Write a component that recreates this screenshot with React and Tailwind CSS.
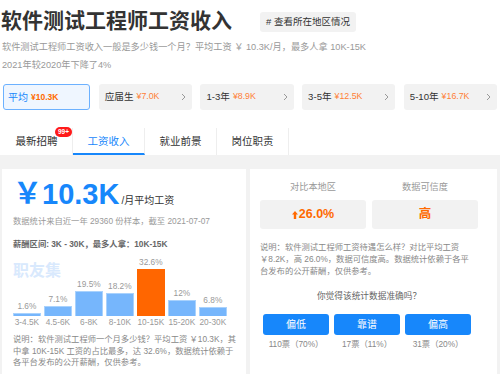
export default function App() {
  const cards = [
    { label: '平均', price: '¥10.3K', active: true },
    { label: '应届生', price: '¥7.0K' },
    { label: '1-3年', price: '¥8.9K' },
    { label: '3-5年', price: '¥12.5K' },
    { label: '5-10年', price: '¥16.7K' },
  ];
  const bars = [
    { pct: '1.6%', h: 3, label: '3-4.5K' },
    { pct: '7.1%', h: 10, label: '4.5-6K' },
    { pct: '19.5%', h: 25, label: '6-8K' },
    { pct: '18.2%', h: 23, label: '8-10K' },
    { pct: '32.6%', h: 47, label: '10-15K', hot: true },
    { pct: '12%', h: 16, label: '15-20K' },
    { pct: '6.8%', h: 9, label: '20-30K' },
  ];
  const tabs = ['最新招聘', '工资收入', '就业前景', '岗位职责'];
  const votes = [
    { t: '偏低', v: '110票（70%）' },
    { t: '靠谱', v: '17票（11%）' },
    { t: '偏高', v: '31票（20%）' },
  ];
  return (
    <div className="w-[500px] h-[374px] overflow-hidden bg-white text-[#333] font-['Liberation_Sans','Noto_Sans_CJK_SC',sans-serif]">
      {/* header */}
      <div className="flex items-start h-[38px]">
        <h1 className="mt-[8px] pl-[1px] text-[21px] leading-[25px] font-bold text-[#333]">软件测试工程师工资收入</h1>
        <span className="ml-[28px] mt-[12px] h-[20px] px-[6px] rounded-[3px] bg-[#f2f2f2] text-[9.5px] leading-[20px] text-[#333]"># 查看所在地区情况</span>
      </div>
      <div className="pl-[2px] text-[9.2px] leading-[18px] text-[#999]">
        <p>软件测试工程师工资收入一般是多少钱一个月？平均工资 ￥ 10.3K/月，最多人拿 10K-15K</p>
        <p>2021年较2020年下降了4%</p>
      </div>
      {/* cards */}
      <div className="mt-[10px] h-[26px] px-[3px] flex gap-[8.5px]">
        {cards.map((c) => (
          <div
            key={c.label}
            className={
              c.active
                ? 'flex-1 flex items-center rounded-[3px] border border-[#6cb1ff] bg-[#eff6ff] pl-[4px]'
                : 'flex-1 flex items-center rounded-[3px] bg-[#f2f2f2] pl-[6px] pr-[6px]'
            }
          >
            <span className={c.active ? 'text-[10px] text-[#1787fb]' : 'text-[9.6px] text-[#333]'}>{c.label}</span>
            <span className={c.active ? 'ml-[3px] text-[8.5px] font-bold text-[#ff6a00]' : 'ml-[3px] text-[8.8px] text-[#ff7f36]'}>{c.price}</span>
            {!c.active && (
              <svg className="ml-auto" width="5" height="8" viewBox="0 0 5 8">
                <polyline points="1,1 4,4 1,7" fill="none" stroke="#999" strokeWidth="1" />
              </svg>
            )}
          </div>
        ))}
      </div>
      {/* tabs */}
      <div className="mt-[18px] h-[27px] pl-[1px] flex">
        {tabs.map((t, i) => (
          <div
            key={t}
            className={
              'relative w-[72px] h-full flex items-center justify-center text-[10.5px] border-r border-[#eeeeee] ' +
              (i === 1 ? 'text-[#1787fb] border-b-2 border-b-[#1787fb] pt-[2px]' : 'text-[#333]')
            }
          >
            {t}
            {i === 0 && (
              <span className="absolute right-[0px] top-[-1px] h-[10px] px-[3px] rounded-full bg-[#ff1a1a] text-white text-[6.5px] leading-[10px] font-bold">99+</span>
            )}
          </div>
        ))}
      </div>
      {/* panels */}
      <div className="h-[219px] bg-[#f2f2f2] pt-[14px] pl-[2px] pr-[3px] flex gap-[4px]">
        {/* left */}
        <div className="w-[244px] h-full bg-white pl-[11px] pr-[14px]">
          <div className="mt-[10.5px] h-[30px] flex items-baseline whitespace-nowrap">
            <span className="text-[29px] leading-none font-bold text-[#1787fb]">￥10.3K</span>
            <span className="ml-[2px] text-[10px] leading-none text-[#333]">/月平均工资</span>
          </div>
          <p className="mt-[4.5px] text-[8.3px] leading-[14px] text-[#999] whitespace-nowrap">数据统计来自近一年 29360 份样本，截至 2021-07-07</p>
          <p className="mt-[9px] text-[8.3px] leading-[14px] font-bold text-[#666] whitespace-nowrap">薪酬区间: 3K - 30K，最多人拿：10K-15K</p>
          <div className="relative h-[76px] flex items-end gap-[3.2px]">
            <span className="absolute left-0 top-[12px] text-[16px] leading-[16px] font-bold text-[#d9e9fd]">职友集</span>
            {bars.map((b) => (
              <div key={b.label} className="relative w-[27.8px] flex flex-col items-center">
                <span className="text-[8.3px] leading-[10px] mb-[2px] text-[#999]">{b.pct}</span>
                <div
                  className={b.hot ? 'w-full bg-[#ff6600]' : 'w-full bg-[#76b6fc] border border-b-0 border-[#a9d2fd]'}
                  style={{ height: b.h }}
                />
                <span className="mt-[1px] text-[8.3px] leading-[10px] text-[#999] whitespace-nowrap">{b.label}</span>
              </div>
            ))}
          </div>
          <div className="mt-[7px] text-[8.3px] leading-[11.5px] text-[#888] whitespace-nowrap">
            <p>说明：软件测试工程师一个月多少钱？平均工资 ￥10.3K，其</p>
            <p>中拿 10K-15K 工资的占比最多，达 32.6%，数据统计依赖于</p>
            <p>各平台发布的公开薪酬，仅供参考。</p>
          </div>
        </div>
        {/* right */}
        <div className="flex-1 h-full bg-white pl-[10px] pr-[19px]">
          <div className="mt-[11px] grid grid-cols-2 gap-[6px] text-[9.2px] leading-[14px] text-[#999] text-center">
            <span>对比本地区</span>
            <span>数据可信度</span>
          </div>
          <div className="mt-[6px] grid grid-cols-2 gap-[6px]">
            <div className="h-[29px] rounded-[3px] bg-[#f2f2f2] flex items-center justify-center text-[#ff6a00] font-bold text-[12.5px]">
              <svg width="6" height="8" viewBox="0 0 6 8" className="mr-[1px]">
                <path d="M3 0 L6 3.5 H4.2 V8 H1.8 V3.5 H0 Z" fill="#ff6a00" />
              </svg>
              26.0%
            </div>
            <div className="h-[29px] rounded-[3px] bg-[#f2f2f2] flex items-center justify-center text-[#ff6a00] font-bold text-[12.5px]">高</div>
          </div>
          <div className="mt-[12px] text-[8.3px] leading-[12px] text-[#888] whitespace-nowrap">
            <p>说明：软件测试工程师工资待遇怎么样？对比平均工资</p>
            <p>￥8.2K，高 26.0%，数据可信度高。数据统计依赖于各平</p>
            <p>台发布的公开薪酬，仅供参考。</p>
          </div>
          <p className="mt-[13px] text-center text-[8.7px] leading-[12px] text-[#666]">你觉得该统计数据准确吗？</p>
          <div className="mt-[12px] ml-[3px] flex gap-[5px]">
            {votes.map((v) => (
              <div key={v.t} className="w-[66px] flex flex-col items-center">
                <div className="w-full h-[21px] rounded-[3px] bg-[#1787fb] text-white text-[10px] flex items-center justify-center">{v.t}</div>
                <span className="mt-[3px] text-[8.3px] leading-[12px] text-[#888] whitespace-nowrap">{v.v}</span>
              </div>
            ))}
          </div>
        </div>
      </div>
    </div>
  );
}
